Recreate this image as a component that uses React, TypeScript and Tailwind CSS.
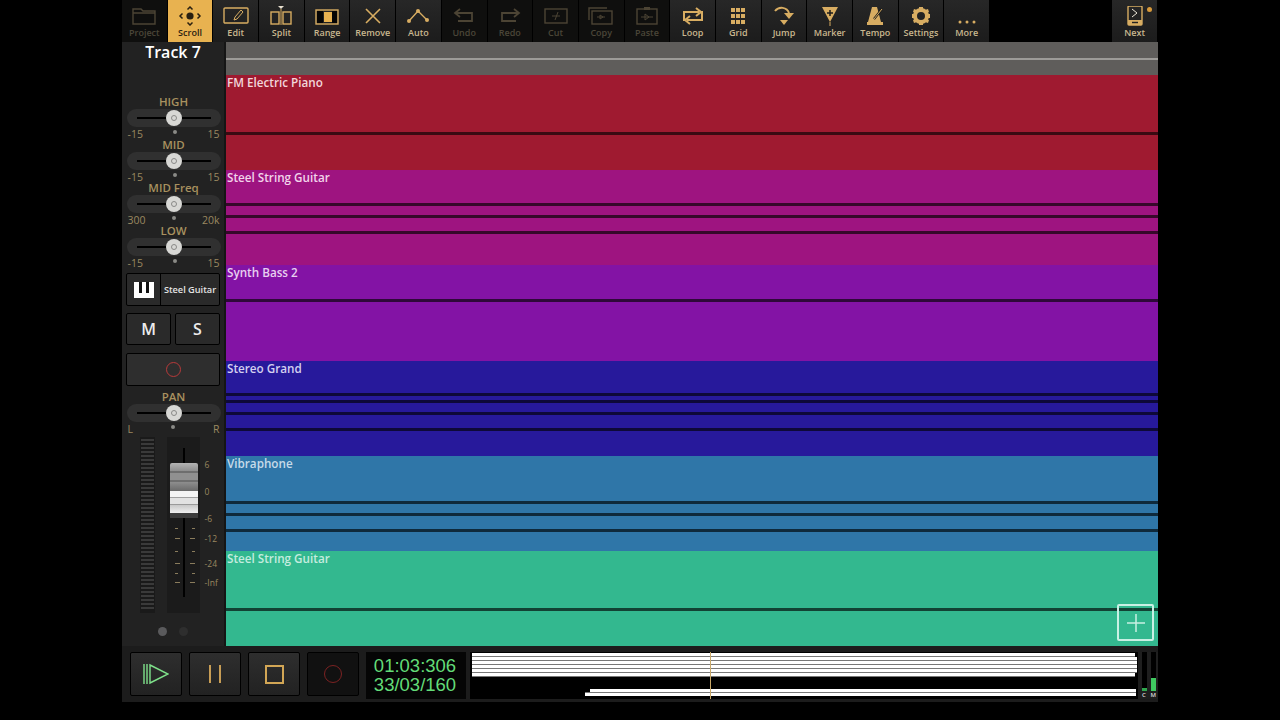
import type { ReactNode } from "react";

const GOLD = "#d8ad62";
const DIM = "#4c4434";

type Tool = { label: string; off?: boolean; active?: boolean; icon: (c: string) => ReactNode };

const glyph = (children: ReactNode) => (
  <svg width="30" height="20" viewBox="0 0 30 20" fill="none" strokeWidth="1.4">
    {children}
  </svg>
);

const tools: Tool[] = [
  {
    label: "Project",
    off: true,
    icon: (c) => glyph(<path d="M4 3h8l2 2h12v13H4z M4 7h22" stroke={c} />),
  },
  {
    label: "Scroll",
    active: true,
    icon: (c) =>
      glyph(
        <>
          <circle cx="15" cy="10" r="3.6" fill={c} />
          <path d="M12.500 3.500 15 1l2.500 2.500M12.500 16.500 15 19l2.500-2.500M7.500 7.500 5 10l2.500 2.500M22.500 7.500 25 10l-2.500 2.500" stroke={c} strokeWidth="1.500" />
        </>,
      ),
  },
  {
    label: "Edit",
    icon: (c) =>
      glyph(
        <>
          <rect x="3" y="2" width="24" height="15" rx="1" stroke={c} />
          <path d="M13 14l1-3 6-7 2 2-6 7z" stroke={c} strokeWidth="1" />
        </>,
      ),
  },
  {
    label: "Split",
    icon: (c) =>
      glyph(
        <>
          <path d="M12 0h6l-3 3z" fill="#e8e0d0" />
          <path d="M15 3v16" stroke={c} strokeWidth="1" />
          <rect x="5" y="6" width="8" height="12" stroke={c} />
          <rect x="17" y="6" width="8" height="12" stroke={c} />
        </>,
      ),
  },
  {
    label: "Range",
    icon: (c) =>
      glyph(
        <>
          <rect x="4" y="4" width="22" height="14" stroke={c} />
          <rect x="5" y="5" width="6" height="12" fill="#050505" />
          <rect x="12" y="6" width="8" height="10" fill="#e8b250" />
          <rect x="20" y="5" width="5" height="12" fill="#050505" />
        </>,
      ),
  },
  {
    label: "Remove",
    icon: (c) => glyph(<path d="M8 3l14 14M22 3 8 17" stroke={c} strokeWidth="1.600" />),
  },
  {
    label: "Auto",
    icon: (c) =>
      glyph(
        <>
          <path d="M6 15 15 5l9 9" stroke={c} strokeWidth="1.400" />
          <circle cx="6" cy="15" r="2" fill={c} />
          <circle cx="15" cy="5" r="2" fill={c} />
          <circle cx="24" cy="14" r="2" fill={c} />
        </>,
      ),
  },
  {
    label: "Undo",
    off: true,
    icon: (c) => glyph(<path d="M11 3 6 7l5 4M6 7h17v8H9" stroke={c} strokeWidth="1.800" />),
  },
  {
    label: "Redo",
    off: true,
    icon: (c) => glyph(<path d="M19 3l5 4-5 4M24 7H7v8h14" stroke={c} strokeWidth="1.800" />),
  },
  {
    label: "Cut",
    off: true,
    icon: (c) =>
      glyph(
        <>
          <rect x="4" y="3" width="22" height="14" stroke={c} />
          <path d="M11 10h8M17 6l-3 8" stroke={c} strokeWidth="1" />
        </>,
      ),
  },
  {
    label: "Copy",
    off: true,
    icon: (c) =>
      glyph(
        <>
          <path d="M3 14V2h18" stroke={c} />
          <rect x="6" y="5" width="20" height="13" stroke={c} />
          <path d="M11 11h8M14 9l3 2-3 2z" stroke={c} strokeWidth="1" />
        </>,
      ),
  },
  {
    label: "Paste",
    off: true,
    icon: (c) =>
      glyph(
        <>
          <rect x="5" y="3" width="20" height="15" stroke={c} />
          <rect x="12" y="1" width="6" height="3" fill={c} />
          <path d="M9 11h12M13 8l4 3-4 3z" stroke={c} strokeWidth="1" />
        </>,
      ),
  },
  {
    label: "Loop",
    icon: (c) =>
      glyph(<path d="M6 15V6h15M18 2l5 4-5 4M24 5v9H9M12 10l-5 4 5 4" stroke={c} strokeWidth="2" />),
  },
  {
    label: "Grid",
    icon: (c) =>
      glyph(
        <path
          d="M8 2h4v4H8zM13 2h4v4h-4zM18 2h4v4h-4zM8 8h4v4H8zM13 8h4v4h-4zM18 8h4v4h-4zM8 14h4v4H8zM13 14h4v4h-4zM18 14h4v4h-4z"
          fill={c}
        />,
      ),
  },
  {
    label: "Jump",
    icon: (c) =>
      glyph(
        <>
          <path d="M6 5c4-5 12-4 14 2" stroke={c} strokeWidth="2" />
          <path d="M15 7h10l-5 6z" fill={c} />
          <path d="M11 14h8l-4 5z" fill={c} />
        </>,
      ),
  },
  {
    label: "Marker",
    icon: (c) =>
      glyph(
        <>
          <path d="M7 1h16l-8 15z" fill={c} />
          <path d="M15 4v6M12 7h6" stroke="#1b1b1b" strokeWidth="1.500" />
          <path d="M15 16v4" stroke={c} strokeWidth="1" />
        </>,
      ),
  },
  {
    label: "Tempo",
    icon: (c) =>
      glyph(
        <>
          <path d="M12 1h5l4 15H8z" fill={c} />
          <path d="M7 16h16v3H7z" fill={c} />
          <path d="M14 13 22 3" stroke="#1b1b1b" strokeWidth="2.200" />
          <path d="M14 13 22 3" stroke={c} strokeWidth="1" />
        </>,
      ),
  },
  {
    label: "Settings",
    icon: (c) =>
      glyph(
        <>
          <circle cx="15" cy="10" r="6" stroke={c} strokeWidth="4" />
          <path
            d="M13 1h4v4h-4zM13 15h4v4h-4zM6 8h4v4H6zM20 8h4v4h-4zM8 3l3 1-1 3-3-1zM22 3l1 3-3 1-1-3zM7 14l3-1 1 3-3 1zM20 13l3 1-1 3-3-1z"
            fill={c}
          />
        </>,
      ),
  },
  {
    label: "More",
    icon: (c) =>
      glyph(
        <>
          <circle cx="8" cy="16" r="1.500" fill={c} />
          <circle cx="15" cy="16" r="1.500" fill={c} />
          <circle cx="22" cy="16" r="1.500" fill={c} />
        </>,
      ),
  },
];

const knobs = [
  { name: "HIGH", lo: "-15", hi: "15" },
  { name: "MID", lo: "-15", hi: "15" },
  { name: "MID Freq", lo: "300", hi: "20k" },
  { name: "LOW", lo: "-15", hi: "15" },
];

function ToolButton({ tool }: { tool: Tool }) {
  const color = tool.active ? "#2a2010" : tool.off ? DIM : GOLD;
  return (
    <button
      type="button"
      className={
        "flex h-[42px] w-[44.700px] shrink-0 flex-col items-center pt-[6px] text-[9px] font-semibold leading-[12px] " +
        (tool.active
          ? "bg-[#e8b250] text-[#2a2010]"
          : tool.off
            ? "bg-[#0f0f0e] text-[#4b4638]"
            : "bg-gradient-to-b from-[#272727] to-[#1c1c1c] text-[#c9b78f]")
      }
    >
      <span className="h-[21px]">{tool.icon(color)}</span>
      <span>{tool.label}</span>
    </button>
  );
}

function Slider({ name, lo, hi }: { name: string; lo: string; hi: string }) {
  return (
    <div className="flex h-[43px] flex-col items-center pl-[1px] pt-[1px]">
      <div className="h-[14px] shrink-0 text-[11.500px] font-semibold leading-[14px] text-[#a8915f]">{name}</div>
      <div className="relative flex h-[18px] w-[94px] shrink-0 items-center justify-center rounded-full bg-[#303030]">
        <div className="h-[2px] w-[74px] bg-black" />
        <div className="absolute left-[39px] top-[1px] flex h-[16px] w-[16px] items-center justify-center rounded-full bg-[#d8d8d5]">
          <div className="h-[6px] w-[6px] rounded-full border border-[#8a8a88]" />
        </div>
      </div>
      <div className="flex h-[10px] w-[92px] shrink-0 items-start justify-between text-[10.500px] font-medium leading-[12px] text-[#9a8860]">
        <span className="mt-[1px]">{lo}</span>
        <span className="mt-[3px] h-[4px] w-[4px] rounded-full bg-[#8a8a86]" />
        <span className="mt-[1px]">{hi}</span>
      </div>
    </div>
  );
}

function Tick({ at, long }: { at: string; long?: boolean }) {
  const bar = "h-px bg-[#8a7c5c] " + (long ? "w-[5px]" : "w-[3px]");
  return (
    <div className={at + " flex h-px justify-between"}>
      <span className={bar} />
      <span className={bar} />
    </div>
  );
}

function Fader() {
  return (
    <div className="flex h-[176px] pl-[18px] text-[8.500px] font-medium text-[#9a8860]">
      <div className="flex w-[15px] flex-col gap-[2px] bg-[#1a1a1a] px-[1px] py-[2px]">
        {Array.from({ length: 43 }).map((_, i) => (
          <div key={i} className="h-[2px] shrink-0 bg-[#3a3a3a]" />
        ))}
      </div>
      <div className="relative ml-[12px] h-[176px] w-[34px] bg-[#1b1b1b]">
        <div className="absolute left-[16px] top-[11px] h-[149px] w-[2px] bg-black" />
        <div className="absolute left-[3px] top-[26px] flex w-[28px] flex-col">
          <div className="h-[8px] rounded-t-[2px] bg-gradient-to-b from-[#b4b4b4] to-[#8e8e8e]" />
          <div className="h-[2px] bg-[#6e6e6e]" />
          <div className="h-[7px] bg-[#909090]" />
          <div className="h-[2px] bg-[#6e6e6e]" />
          <div className="h-[9px] bg-gradient-to-b from-[#8e8e8e] to-[#6a6a6a]" />
          <div className="h-[6px] bg-[#f4f4f4]" />
          <div className="h-px bg-[#a0a0a0]" />
          <div className="h-[6px] bg-[#e2e2e2]" />
          <div className="h-px bg-[#9a9a9a]" />
          <div className="h-[8px] bg-gradient-to-b from-[#c8c8c8] to-[#f0f0f0]" />
          <div className="h-[5px] bg-[#3c3c3c]" />
        </div>
        <div className="absolute left-[8px] top-[91px] flex w-[20px] flex-col">
          <Tick at="mt-0" />
          <Tick at="mt-[9px]" long />
          <Tick at="mt-[12px]" />
          <Tick at="mt-[11px]" long />
          <Tick at="mt-[9px]" />
          <Tick at="mt-[8px]" long />
        </div>
      </div>
      <div className="relative ml-[5px] w-[20px]">
        <span className="absolute left-0 top-[22px]">6</span>
        <span className="absolute left-0 top-[49px]">0</span>
        <span className="absolute left-0 top-[76px]">-6</span>
        <span className="absolute left-0 top-[96px]">-12</span>
        <span className="absolute left-0 top-[121px]">-24</span>
        <span className="absolute left-0 top-[140px]">-Inf</span>
      </div>
    </div>
  );
}

function Sidebar() {
  return (
    <aside className="flex h-[604px] w-[104px] shrink-0 flex-col border-r-2 border-[#151515] bg-[#222222]">
      <div className="mt-[-2px] h-[28px] shrink-0 text-center text-[16px] font-semibold leading-[24px] text-white">Track 7</div>
      <div className="mt-[26px] flex flex-col">
        {knobs.map((k) => (
          <Slider key={k.name} {...k} />
        ))}
      </div>
      <div className="mx-[4px] mt-[7px] flex h-[33px] w-[94px] shrink-0 rounded-[2px] border border-black bg-[#2a2a2a]">
        <div className="flex w-[34px] items-center justify-center border-r border-black">
          <svg width="20" height="16" viewBox="0 0 20 16">
            <path d="M0 0h20v16H0z" fill="#fff" />
            <path d="M5 0h3v11H5zM12 0h3v11h-3z" fill="#111" />
          </svg>
        </div>
        <div className="flex-1 text-center text-[9.200px] font-semibold leading-[31px] text-[#e4e4e4]">Steel Guitar</div>
      </div>
      <div className="mx-[4px] mt-[7px] flex w-[94px] shrink-0 justify-between">
        {["M", "S"].map((t) => (
          <button
            key={t}
            type="button"
            className="h-[32px] w-[45px] rounded-[2px] border border-black bg-[#2a2a2a] text-[16px] font-semibold text-[#ececec]"
          >
            {t}
          </button>
        ))}
      </div>
      <div className="mx-[4px] mt-[8px] flex h-[33px] w-[94px] shrink-0 items-center justify-center rounded-[2px] border border-black bg-[#2e2e2e]">
        <div className="h-[15px] w-[15px] rounded-full border-[1.500px] border-[#b83a3a]" />
      </div>
      <div className="mt-[3px]">
        <Slider name="PAN" lo="L" hi="R" />
      </div>
      <div className="mt-[5px]">
        <Fader />
      </div>
      <div className="mt-[14px] flex gap-[12px] pl-[36px]">
        <div className="h-[9px] w-[9px] rounded-full bg-[#5a5a5c]" />
        <div className="h-[9px] w-[9px] rounded-full bg-[#2e2e2e]" />
      </div>
    </aside>
  );
}

function Track({ name, color, labelClass, children }: {
  name: string;
  color: string;
  labelClass: string;
  children?: ReactNode;
}) {
  return (
    <div className={"relative flex-1 " + color}>
      <span className={"absolute left-[1px] top-[-1px] text-[11.700px] font-semibold leading-[16px] " + labelClass}>{name}</span>
      <div className="flow-root">{children}</div>
    </div>
  );
}

function Line({ at, color }: { at: string; color: string }) {
  return <div className={at + " h-[3px] " + color} />;
}

function Arrange() {
  return (
    <div className="relative flex h-[604px] flex-1 flex-col">
      <div className="h-[33px] shrink-0 bg-[#5f5d5b] pt-[16px]">
        <div className="h-[2px] bg-[#9d9b98]" />
      </div>
      <Track name="FM Electric Piano" color="bg-[#9f1a30]" labelClass="text-[#f2d6db]">
        <Line at="mt-[57px]" color="bg-[#3a0a12]" />
      </Track>
      <Track name="Steel String Guitar" color="bg-[#9e1480]" labelClass="text-[#f2d3ea]">
        <Line at="mt-[33px]" color="bg-[#36082a]" />
        <Line at="mt-[9px]" color="bg-[#36082a]" />
        <Line at="mt-[13px]" color="bg-[#36082a]" />
      </Track>
      <Track name="Synth Bass 2" color="bg-[#8313a5]" labelClass="text-[#e8d0f0]">
        <Line at="mt-[34px]" color="bg-[#2e0839]" />
      </Track>
      <Track name="Stereo Grand" color="bg-[#27199b]" labelClass="text-[#d4d0f0]">
        <Line at="mt-[32px]" color="bg-[#0e0938]" />
        <Line at="mt-[4px]" color="bg-[#0e0938]" />
        <Line at="mt-[9px]" color="bg-[#0e0938]" />
        <Line at="mt-[13px]" color="bg-[#0e0938]" />
      </Track>
      <Track name="Vibraphone" color="bg-[#2f76a8]" labelClass="text-[#c6dbe9]">
        <Line at="mt-[45px]" color="bg-[#0f2a3c]" />
        <Line at="mt-[9px]" color="bg-[#0f2a3c]" />
        <Line at="mt-[13px]" color="bg-[#0f2a3c]" />
      </Track>
      <Track name="Steel String Guitar" color="bg-[#33b88f]" labelClass="text-[#c4ecdf]">
        <Line at="mt-[57px]" color="bg-[#124234]" />
      </Track>
      <div className="absolute bottom-[5px] right-[4px] flex h-[37px] w-[37px] items-center justify-center rounded-[2px] border-2 border-[#c9f0e4]">
        <svg width="18" height="18" viewBox="0 0 18 18" stroke="#c9f0e4" strokeWidth="1.500">
          <path d="M9 0v18M0 9h18" />
        </svg>
      </div>
    </div>
  );
}

function TransportButton({ dark, children }: { dark?: boolean; children: ReactNode }) {
  return (
    <button
      type="button"
      className={
        "flex h-[44px] w-[52px] items-center justify-center rounded-[2px] border border-black " +
        (dark ? "bg-[#111111]" : "bg-gradient-to-b from-[#2e2e2e] to-[#222222]")
      }
    >
      {children}
    </button>
  );
}

function Overview() {
  return (
    <div className="relative h-[47px] w-[668px] bg-black pl-[2px] pr-[1px]">
      <div className="flex flex-col pt-[1px]">
        {[0, 1, 2, 3, 4, 5].map((i) => (
          <div
            key={i}
            className={"h-[4px] border-b border-[#777777] bg-white " + (i === 0 || i === 5 ? "mr-[2px]" : "")}
          />
        ))}
      </div>
      <div className="ml-[118px] mr-[1px] mt-[12px] h-[3px] bg-white" />
      <div className="ml-[113px] mr-[1px] h-[4px] border-t border-[#777777] bg-white" />
      <div className="absolute left-[240px] top-0 h-[47px] w-px bg-[#c9a868]" />
    </div>
  );
}

function Transport() {
  return (
    <div className="flex h-[56px] items-center bg-[#1c1c1c] pl-[8px]">
      <div className="flex gap-[7px]">
        <TransportButton>
          <svg width="26" height="22" viewBox="0 0 26 22" fill="none" stroke="#7ee08a" strokeWidth="1.400">
            <path d="M1 1v20M4 1v20" />
            <path d="M7 2l18 9-18 9z" />
          </svg>
        </TransportButton>
        <TransportButton>
          <svg width="16" height="18" viewBox="0 0 16 18" fill="#c79d55">
            <path d="M2 0h2v18H2zM12 0h2v18h-2z" />
          </svg>
        </TransportButton>
        <TransportButton>
          <div className="h-[19px] w-[19px] border-2 border-[#d2a655]" />
        </TransportButton>
        <TransportButton dark>
          <div className="h-[18px] w-[18px] rounded-full border-[1.500px] border-[#7c2222]" />
        </TransportButton>
      </div>
      <div className="ml-[7px] mt-[2px] flex h-[47px] w-[100px] flex-col items-center justify-center bg-[#050505] pr-[2px] text-[18.500px] leading-[19px] text-[#63dc78] [font-family:'Liberation_Sans',sans-serif]">
        <span>01:03:306</span>
        <span>33/03/160</span>
      </div>
      <div className="ml-[4px] mt-[2px]">
        <Overview />
      </div>
      <div className="ml-[2px] mt-[2px] flex h-[47px] w-[18px] flex-col bg-[#1f1f1f] px-[2px]">
        <div className="flex h-[39px] justify-between">
          <div className="flex w-[5px] flex-col justify-end bg-black">
            <div className="h-[3px] bg-[#2fa84e]" />
          </div>
          <div className="flex w-[5px] flex-col justify-end bg-black">
            <div className="h-[13px] bg-[#3fc860]" />
          </div>
        </div>
        <div className="flex justify-between text-[6px] font-semibold leading-[8px] text-[#d8d8d8]">
          <span>C</span>
          <span>M</span>
        </div>
      </div>
    </div>
  );
}

export default function App() {
  return (
    <div className="flex h-[720px] w-[1280px] justify-center overflow-hidden bg-black [font-family:'Open_Sans',sans-serif]">
      <div className="w-[1036px]">
        <div className="flex h-[42px] gap-px">
          {tools.map((t) => (
            <ToolButton key={t.label} tool={t} />
          ))}
          <div className="flex-1" />
          <div className="relative mr-px">
            <ToolButton
              tool={{
                label: "Next",
                icon: (c) =>
                  glyph(
                    <>
                      <rect x="8" y="0" width="14" height="19" rx="1" stroke={c} />
                      <path d="M8 14h14v5H8z" fill={c} />
                      <path d="M12 16.500h6" stroke="#222" />
                      <path d="M12 3l5 4-5 4" stroke="#ece6d8" strokeWidth="1" />
                    </>,
                  ),
              }}
            />
            <span className="absolute right-[5px] top-[7px] h-[5px] w-[5px] rounded-full bg-[#d99a3a]" />
          </div>
        </div>
        <div className="flex">
          <Sidebar />
          <Arrange />
        </div>
        <Transport />
      </div>
    </div>
  );
}
